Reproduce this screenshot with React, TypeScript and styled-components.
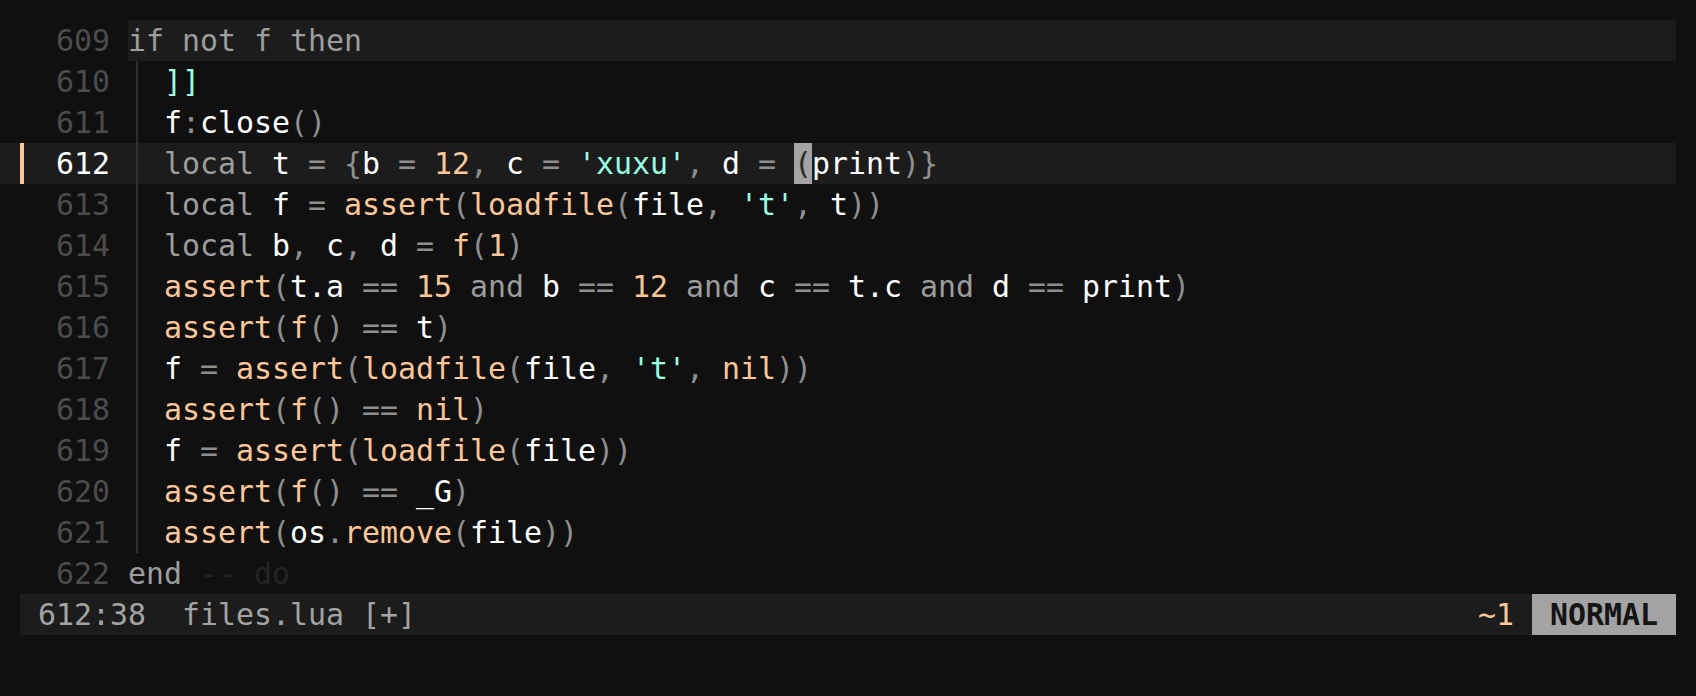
import React from "react";
import styled, { createGlobalStyle } from "styled-components";

type Kind = "kw" | "id" | "fn" | "num" | "str" | "p" | "ctx" | "dim" | "cur";
type Tok = [Kind, string];

const C = {
  bg: "#101010",
  line: "#1c1c1c",
  kw: "#9d9d9d",
  id: "#ffffff",
  fn: "#ffc799",
  num: "#ffc799",
  str: "#99ffe4",
  p: "#8f8f8f",
  ctx: "#9d9d9d",
  dim: "#242424",
  nr: "#4c4c4c",
  guide: "#2e2e2e",
};

const Global = createGlobalStyle`
  html, body {
    margin: 0;
    padding: 0;
    background: ${C.bg};
  }
  body {
    font-family: "DejaVu Sans Mono", "Liberation Mono", monospace;
    font-size: 29.9px;
  }
`;

const Screen = styled.div`
  width: 1696px;
  height: 696px;
  box-sizing: border-box;
  padding-top: 20px;
  background: ${C.bg};
  display: flex;
  flex-direction: column;
`;

const Editor = styled.div`
  width: 1676px;
  display: flex;
  flex-direction: column;
`;

const Row = styled.div<{ $current?: boolean }>`
  display: flex;
  height: 41px;
  line-height: 41px;
  padding-left: 20px;
  white-space: pre;
  background: ${(p) => (p.$current ? C.line : "transparent")};
`;

const Sign = styled.span<{ $changed?: boolean }>`
  flex: none;
  width: 36px;
  height: 41px;
  background: ${(p) =>
    p.$changed ? "linear-gradient(to right, #ffc799 4px, transparent 4px)" : "none"};
`;

const LineNr = styled.span<{ $current?: boolean }>`
  flex: none;
  width: 54px;
  margin-right: 18px;
  text-align: right;
  color: ${(p) => (p.$current ? "#ffffff" : C.nr)};
`;

const Code = styled.span<{ $context?: boolean }>`
  flex: 1;
  min-width: 0;
  background: ${(p) => (p.$context ? C.line : "transparent")};
`;

const Indent = styled.span`
  display: inline-block;
  vertical-align: top;
  width: 36px;
  height: 41px;
  background: linear-gradient(
    to right,
    transparent 8px,
    ${C.guide} 8px,
    ${C.guide} 10px,
    transparent 10px
  );
`;

const Tk = styled.span<{ $kind: Kind }>`
  color: ${(p) => C[p.$kind as keyof typeof C] ?? "#fff"};
`;

const Cursor = styled.span`
  display: inline-block;
  vertical-align: top;
  height: 41px;
  background: #a3a3a3;
  color: #2a2a2a;
`;

const StatusBar = styled.div`
  margin-left: 20px;
  width: 1656px;
  height: 41px;
  line-height: 41px;
  background: ${C.line};
  display: flex;
  white-space: pre;
  color: #a3a3a3;
`;

const StatusLeft = styled.span`
  padding-left: 18px;
  flex: 1;
`;

const Changes = styled.span`
  color: ${C.fn};
`;

const Mode = styled.span`
  padding: 0 18px;
  background: #a3a3a3;
  color: #141414;
  font-weight: bold;
`;

const L = (...toks: Tok[]) => toks;

type Line = {
  n: number;
  indent?: boolean;
  current?: boolean;
  changed?: boolean;
  context?: boolean;
  toks: Tok[];
};

const lines: Line[] = [
  { n: 609, context: true, toks: L(["ctx", "if not f then"]) },
  { n: 610, indent: true, toks: L(["str", "]]"]) },
  { n: 611, indent: true, toks: L(["id", "f"], ["p", ":"], ["id", "close"], ["p", "()"]) },
  {
    n: 612,
    indent: true,
    current: true,
    changed: true,
    toks: L(
      ["kw", "local"], ["id", " t "], ["p", "= {"], ["id", "b "], ["p", "= "], ["num", "12"],
      ["p", ", "], ["id", "c "], ["p", "= "], ["str", "'xuxu'"], ["p", ", "], ["id", "d "],
      ["p", "= "], ["cur", "("], ["id", "print"], ["p", ")}"]
    ),
  },
  {
    n: 613,
    indent: true,
    toks: L(
      ["kw", "local"], ["id", " f "], ["p", "= "], ["fn", "assert"], ["p", "("], ["fn", "loadfile"],
      ["p", "("], ["id", "file"], ["p", ", "], ["str", "'t'"], ["p", ", "], ["id", "t"], ["p", "))"]
    ),
  },
  {
    n: 614,
    indent: true,
    toks: L(
      ["kw", "local"], ["id", " b"], ["p", ", "], ["id", "c"], ["p", ", "], ["id", "d "], ["p", "= "],
      ["fn", "f"], ["p", "("], ["num", "1"], ["p", ")"]
    ),
  },
  {
    n: 615,
    indent: true,
    toks: L(
      ["fn", "assert"], ["p", "("], ["id", "t.a "], ["p", "== "], ["num", "15"], ["kw", " and "],
      ["id", "b "], ["p", "== "], ["num", "12"], ["kw", " and "], ["id", "c "], ["p", "== "],
      ["id", "t.c"], ["kw", " and "], ["id", "d "], ["p", "== "], ["id", "print"], ["p", ")"]
    ),
  },
  {
    n: 616,
    indent: true,
    toks: L(["fn", "assert"], ["p", "("], ["fn", "f"], ["p", "() == "], ["id", "t"], ["p", ")"]),
  },
  {
    n: 617,
    indent: true,
    toks: L(
      ["id", "f "], ["p", "= "], ["fn", "assert"], ["p", "("], ["fn", "loadfile"], ["p", "("],
      ["id", "file"], ["p", ", "], ["str", "'t'"], ["p", ", "], ["num", "nil"], ["p", "))"]
    ),
  },
  {
    n: 618,
    indent: true,
    toks: L(["fn", "assert"], ["p", "("], ["fn", "f"], ["p", "() == "], ["num", "nil"], ["p", ")"]),
  },
  {
    n: 619,
    indent: true,
    toks: L(
      ["id", "f "], ["p", "= "], ["fn", "assert"], ["p", "("], ["fn", "loadfile"], ["p", "("],
      ["id", "file"], ["p", "))"]
    ),
  },
  {
    n: 620,
    indent: true,
    toks: L(["fn", "assert"], ["p", "("], ["fn", "f"], ["p", "() == "], ["id", "_G"], ["p", ")"]),
  },
  {
    n: 621,
    indent: true,
    toks: L(
      ["fn", "assert"], ["p", "("], ["id", "os"], ["p", "."], ["fn", "remove"], ["p", "("],
      ["id", "file"], ["p", "))"]
    ),
  },
  { n: 622, toks: L(["kw", "end"], ["dim", " -- do"]) },
];

export default function App() {
  return (
    <>
      <Global />
      <Screen>
        <Editor>
          {lines.map((ln) => (
            <Row key={ln.n} $current={ln.current}>
              <Sign $changed={ln.changed} />
              <LineNr $current={ln.current}>{ln.n}</LineNr>
              <Code $context={ln.context}>
                {ln.indent && <Indent />}
                {ln.toks.map(([k, t], i) =>
                  k === "cur" ? (
                    <Cursor key={i}>{t}</Cursor>
                  ) : (
                    <Tk key={i} $kind={k}>
                      {t}
                    </Tk>
                  )
                )}
              </Code>
            </Row>
          ))}
        </Editor>
        <StatusBar>
          <StatusLeft>612:38  files.lua [+]</StatusLeft>
          <Changes>~1 </Changes>
          <Mode>NORMAL</Mode>
        </StatusBar>
      </Screen>
    </>
  );
}
